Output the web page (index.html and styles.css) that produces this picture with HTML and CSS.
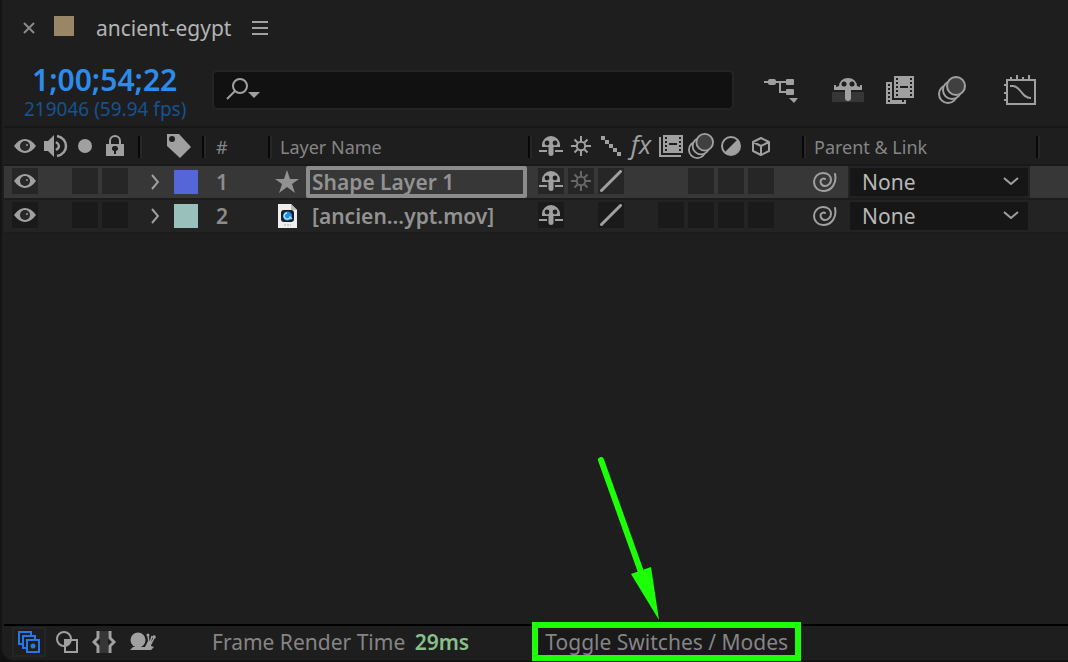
FILE: index.html
```
<!DOCTYPE html>
<html lang="en">
<head>
    <meta charset="UTF-8">
    <meta name="viewport" content="width=device-width, initial-scale=1.0">
    <title>ancient-egypt</title>
    <link rel="stylesheet" href="styles.css">
</head>
<body>

    <!-- Shared icons -->
    <svg class="sprite" aria-hidden="true">
        <symbol id="eye" viewBox="0 0 22 14">
            <path d="M0 7Q5 0 11 0T22 7Q17 14 11 14T0 7z" fill="currentColor"/>
            <circle cx="11" cy="7" r="5" fill="#222"/>
            <circle cx="11" cy="7" r="4" fill="#292929"/>
            <circle cx="13" cy="6" r="1" fill="#999"/>
        </symbol>
        <symbol id="shy" viewBox="0 0 24 20">
            <path d="M3 11V9a9 9 0 0 1 18 0v2h-6.500v7a2.500 2 0 0 1-5 0v-7zM0 14h8v2H0zM16 14h8v2h-8z" fill="currentColor"/>
            <circle cx="8" cy="7" r="2.400" fill="#1e1e1e"/>
            <circle cx="16" cy="7" r="2.400" fill="#1e1e1e"/>
        </symbol>
        <symbol id="sun" viewBox="0 0 20 20">
            <g fill="none" stroke="currentColor" stroke-width="2">
                <circle cx="10" cy="10" r="4.200"/>
                <path d="M10 0v5M10 15v5M0 10h5M15 10h5M3.500 3.500l3 3M13.500 13.500l3 3M3.500 16.500l3-3M13.500 6.500l3-3"/>
            </g>
        </symbol>
        <symbol id="slash" viewBox="0 0 22 22">
            <path d="M1.500 20.500L20.500 1.500" stroke="currentColor" stroke-width="3" stroke-linecap="round"/>
        </symbol>
        <symbol id="film" viewBox="0 0 20 22">
            <path d="M0 0h20v22H0z" fill="currentColor"/>
            <path d="M2 2h2v2H2zM2 6h2v2H2zM2 10h2v2H2zM2 14h2v2H2zM2 18h2v2H2zM16 2h2v2h-2zM16 6h2v2h-2zM16 10h2v2h-2zM16 14h2v2h-2zM16 18h2v2h-2zM6 10h8v2H6z" fill="#1e1e1e"/>
        </symbol>
        <symbol id="blur" viewBox="0 0 28 28">
            <g fill="#1e1e1e" stroke="currentColor" stroke-width="2">
                <circle cx="10" cy="18" r="9"/>
                <circle cx="14" cy="14" r="9"/>
                <circle cx="18" cy="10" r="9" fill="#404040"/>
            </g>
        </symbol>
        <symbol id="chevron" viewBox="0 0 8 16">
            <path d="M1 1l6 7-6 7" fill="none" stroke="currentColor" stroke-width="2"/>
        </symbol>
        <symbol id="down" viewBox="0 0 16 8">
            <path d="M1 1l7 6 7-6" fill="none" stroke="currentColor" stroke-width="2"/>
        </symbol>
        <symbol id="spiral" viewBox="0 0 24 20">
            <path d="M22 2C24 11 19 19 10 19 5 19 1 15 1 10 1 5 5 1 10 1c5 0 8 3 8 7 0 3-3 6-6 6-4 0-5-4-4-6 1-1 3-2 4-1" fill="none" stroke="currentColor" stroke-width="2" stroke-linecap="round"/>
        </symbol>
    </svg>

    <div class="panel">
        <header class="tab">
            <button class="close" aria-label="Close"><svg width="10" height="10" viewBox="0 0 10 10"><path d="M0 0l10 10M10 0L0 10" stroke="currentColor" stroke-width="2"/></svg></button>
            <span class="comp-color"></span>
            <h1>ancient-egypt</h1>
            <button class="menu" aria-label="Panel menu"><svg width="16" height="14" viewBox="0 0 16 14"><path d="M0 1h16M0 7h16M0 13h16" stroke="currentColor" stroke-width="2"/></svg></button>
        </header>

        <div class="controls">
            <div class="time">
                <div class="timecode">1;00;54;22</div>
                <div class="frames">219046 (59.94 fps)</div>
            </div>
            <label class="search">
                <svg width="34" height="24" viewBox="0 0 34 24">
                    <circle cx="14" cy="8" r="7" fill="none" stroke="currentColor" stroke-width="2"/>
                    <path d="M9 13l-8 8" stroke="currentColor" stroke-width="2"/>
                    <path d="M22 14h12l-6 6z" fill="currentColor"/>
                </svg>
                <input type="text" aria-label="Search layers">
            </label>
            <div class="tools">
                <button class="flow" aria-label="Mini-flowchart">
                    <svg width="34" height="26" viewBox="0 0 34 26">
                        <path d="M0 5h24M16 5v10h8" fill="none" stroke="currentColor" stroke-width="2"/>
                        <g fill="currentColor">
                            <rect x="4" y="2" width="8" height="6" rx="2"/>
                            <rect x="22" y="2" width="8" height="6" rx="1"/>
                            <rect x="22" y="12" width="8" height="6" rx="1"/>
                            <path d="M25 21h9l-4 5z"/>
                        </g>
                    </svg>
                </button>
                <button class="hide-shy" aria-label="Hide shy layers">
                    <svg width="32" height="24" viewBox="0 0 32 24">
                        <path d="M0 14h32v10H0z" fill="#363636"/>
                        <path d="M7 8a9 8 0 0 1 18 0l3 1V7h2v5H19v8a3 3 0 0 1-6 0v-8H2V7h2v2z" fill="currentColor"/>
                        <circle cx="12" cy="6" r="2.500" fill="#1e1e1e"/>
                        <circle cx="20" cy="6" r="2.500" fill="#1e1e1e"/>
                    </svg>
                </button>
                <button aria-label="Frame blending">
                    <svg width="28" height="28" viewBox="0 0 28 28">
                        <path d="M0 6h6v18h14v4H0z" fill="currentColor"/>
                        <path d="M2 8h2v2H2zM2 12h2v2H2zM2 16h2v2H2zM2 20h2v2H2zM2 24h2v2H2zM16 24h2v2h-2z" fill="#1e1e1e"/>
                        <use href="#film" x="8" y="0" width="20" height="22"/>
                    </svg>
                </button>
                <button aria-label="Motion blur"><svg width="28" height="28"><use href="#blur"/></svg></button>
                <button class="graph" aria-label="Graph editor">
                    <svg width="32" height="30" viewBox="0 0 32 30">
                        <path d="M3 5h28v24H3zM7 2v3M13 0v5M19 2v3M25 0v5M0 10h3M0 18h3M0 25h3M6 11h3c8 0 8 12 18 12" fill="none" stroke="currentColor" stroke-width="2"/>
                    </svg>
                </button>
            </div>
        </div>

        <main class="layers">
            <table>
                <colgroup>
                    <col class="col-av"><col class="col-label"><col class="col-num"><col class="col-name">
                    <col class="col-switches"><col class="col-parent"><col>
                </colgroup>
                <thead>
                    <tr>
                        <th>
                            <div class="cells av">
                                <span><svg width="22" height="14"><use href="#eye"/></svg></span>
                                <span><svg width="24" height="22" viewBox="0 0 24 22"><path d="M1 6h4l6-6v22l-6-6H1z" fill="currentColor"/><path d="M13 7q6 4 0 8M14 1c12 2 12 18 0 20" fill="none" stroke="currentColor" stroke-width="2.500"/></svg></span>
                                <span><svg width="14" height="14"><circle cx="7" cy="7" r="7" fill="currentColor"/></svg></span>
                                <span><svg width="18" height="22" viewBox="0 0 18 22"><path d="M4 10V6a5 5 0 0 1 10 0v4" fill="none" stroke="currentColor" stroke-width="2"/><path d="M0 9h18v12H0z" fill="currentColor"/><path d="M9 11a2.500 2.500 0 0 1 1 5v3H8v-3a2.500 2.500 0 0 1 1-5z" fill="#1e1e1e"/></svg></span>
                            </div>
                        </th>
                        <th class="tag"><svg width="24" height="24" viewBox="0 0 24 24"><path d="M0 0h12l12 13-11 11L0 12z" fill="currentColor"/><circle cx="5" cy="5" r="3" fill="#1e1e1e"/></svg></th>
                        <th class="num">#</th>
                        <th class="name-head">Layer Name</th>
                        <th>
                            <div class="cells switches">
                                <span><svg width="24" height="20"><use href="#shy"/></svg></span>
                                <span><svg width="20" height="20"><use href="#sun"/></svg></span>
                                <span><svg width="20" height="20" viewBox="0 0 20 20"><path d="M0 0h4v4h4v4h4v4h4v4h4v4h-4v-4h-4v-4H8V8H4V4H0z" fill="currentColor"/></svg></span>
                                <span class="fx">fx</span>
                                <span><svg width="24" height="24" viewBox="0 0 24 24"><path d="M1 3v19h21" fill="none" stroke="currentColor" stroke-width="2"/><path d="M4 1h20v18H4z" fill="currentColor"/><path d="M6 3h2v2H6zM6 7h2v2H6zM6 11h2v2H6zM6 15h2v2H6zM20 3h2v2h-2zM20 7h2v2h-2zM20 11h2v2h-2zM20 15h2v2h-2zM10 9h8v2h-8z" fill="#1e1e1e"/></svg></span>
                                <span><svg width="26" height="26"><use href="#blur"/></svg></span>
                                <span><svg width="20" height="20" viewBox="0 0 20 20"><circle cx="10" cy="10" r="9" fill="none" stroke="currentColor" stroke-width="2"/><path d="M17 3A10 10 0 0 1 3 17z" fill="currentColor"/></svg></span>
                                <span><svg width="18" height="20" viewBox="0 0 18 20"><path d="M9 2l8 4v9l-8 4-8-4V6zM1 6l8 4 8-4M9 10v9" fill="none" stroke="currentColor" stroke-width="2" stroke-linejoin="round"/></svg></span>
                            </div>
                        </th>
                        <th class="parent-head">Parent &amp; Link</th>
                        <th></th>
                    </tr>
                </thead>
                <tbody>
                    <tr class="selected">
                        <td>
                            <div class="cells av">
                                <button class="box" aria-label="Video"><svg width="22" height="14"><use href="#eye"/></svg></button>
                                <span></span>
                                <button class="box" aria-label="Solo"></button>
                                <button class="box" aria-label="Lock"></button>
                            </div>
                        </td>
                        <td>
                            <div class="label">
                                <button aria-label="Expand layer"><svg width="8" height="16"><use href="#chevron"/></svg></button>
                                <span class="swatch blue"></span>
                            </div>
                        </td>
                        <td class="num">1</td>
                        <td>
                            <div class="name">
                                <svg width="24" height="24" viewBox="0 0 24 24"><path d="M12 0l3 9h9l-7 5 3 9-8-6-8 6 3-9-7-5h9z" fill="currentColor"/></svg>
                                <input type="text" value="Shape Layer 1" aria-label="Layer name">
                            </div>
                        </td>
                        <td>
                            <div class="cells switches">
                                <button class="box" aria-label="Shy"><svg width="24" height="20"><use href="#shy"/></svg></button>
                                <button class="box dim" aria-label="Continuously rasterize"><svg width="20" height="20"><use href="#sun"/></svg></button>
                                <button class="box" aria-label="Quality"><svg width="22" height="22"><use href="#slash"/></svg></button>
                                <span></span>
                                <span></span>
                                <button class="box" aria-label="Motion blur"></button>
                                <button class="box" aria-label="Adjustment layer"></button>
                                <button class="box" aria-label="3D layer"></button>
                            </div>
                        </td>
                        <td>
                            <div class="parent">
                                <button aria-label="Parent pick whip"><svg width="24" height="20"><use href="#spiral"/></svg></button>
                                <div class="select">
                                    <select aria-label="Parent of layer 1"><option>None</option></select>
                                    <svg width="16" height="8"><use href="#down"/></svg>
                                </div>
                            </div>
                        </td>
                        <td></td>
                    </tr>
                    <tr>
                        <td>
                            <div class="cells av">
                                <button class="box" aria-label="Video"><svg width="22" height="14"><use href="#eye"/></svg></button>
                                <span></span>
                                <button class="box" aria-label="Solo"></button>
                                <button class="box" aria-label="Lock"></button>
                            </div>
                        </td>
                        <td>
                            <div class="label">
                                <button aria-label="Expand layer"><svg width="8" height="16"><use href="#chevron"/></svg></button>
                                <span class="swatch aqua"></span>
                            </div>
                        </td>
                        <td class="num">2</td>
                        <td>
                            <div class="name">
                                <svg width="24" height="24" viewBox="0 0 24 24">
                                    <path d="M3 0h13l6 6v18H3z" fill="#eee"/>
                                    <path d="M16 0v6h6z" fill="#bbb"/>
                                    <rect x="6" y="6" width="13" height="12" rx="3" fill="#1b1e25"/>
                                    <circle cx="12.500" cy="12" r="4.500" fill="#1e8af0"/>
                                    <path d="M12 9a3 3 0 1 0 3 4l2 2" fill="none" stroke="#9fe0ff" stroke-width="1.500"/>
                                    <path d="M9 21h7" stroke="#aaa" stroke-dasharray="2 1"/>
                                </svg>
                                <span class="file">[ancien...ypt.mov]</span>
                            </div>
                        </td>
                        <td>
                            <div class="cells switches">
                                <button class="box" aria-label="Shy"><svg width="24" height="20"><use href="#shy"/></svg></button>
                                <span></span>
                                <button class="box" aria-label="Quality"><svg width="22" height="22"><use href="#slash"/></svg></button>
                                <span></span>
                                <button class="box" aria-label="Frame blending"></button>
                                <button class="box" aria-label="Motion blur"></button>
                                <button class="box" aria-label="Adjustment layer"></button>
                                <button class="box" aria-label="3D layer"></button>
                            </div>
                        </td>
                        <td>
                            <div class="parent">
                                <button aria-label="Parent pick whip"><svg width="24" height="20"><use href="#spiral"/></svg></button>
                                <div class="select">
                                    <select aria-label="Parent of layer 2"><option>None</option></select>
                                    <svg width="16" height="8"><use href="#down"/></svg>
                                </div>
                            </div>
                        </td>
                        <td></td>
                    </tr>
                </tbody>
            </table>
        </main>

        <footer class="status">
            <div class="panes">
                <button class="active" aria-label="Layer switches pane">
                    <svg width="22" height="22" viewBox="0 0 22 22"><g fill="#1e1e1e" stroke="currentColor" stroke-width="2"><path d="M1 1h12v12H1z"/><path d="M5 5h12v12H5z"/><path d="M9 9h12v12H9z"/></g><circle cx="15" cy="15" r="2.500" fill="currentColor"/></svg>
                </button>
                <button aria-label="Transfer controls pane">
                    <svg width="22" height="22" viewBox="0 0 22 22"><path d="M9 9h6a7 7 0 0 1-6 6z" fill="currentColor"/><circle cx="8" cy="8" r="7" fill="none" stroke="currentColor" stroke-width="2"/><path d="M9 9h12v12H9z" fill="none" stroke="currentColor" stroke-width="2"/></svg>
                </button>
                <button aria-label="In/Out pane">
                    <svg width="24" height="22" viewBox="0 0 24 22"><path d="M8 0h8v22H8z" fill="#363636"/><path d="M6 0v7l-4 4 4 4v7M18 0v7l4 4-4 4v7" fill="none" stroke="currentColor" stroke-width="3"/></svg>
                </button>
                <button aria-label="Render time pane">
                    <svg width="26" height="20" viewBox="0 0 26 20"><circle cx="8" cy="8" r="7.500" fill="currentColor"/><path d="M0 18l3-3h12l3-6h4l-1 5 3 1-3 3z" fill="currentColor"/><path d="M19 11l-1-8M20 11l2-7M21 12l3-6" stroke="currentColor" stroke-width="1.500"/><circle cx="18" cy="3" r="1.500" fill="currentColor"/><circle cx="24" cy="5" r="1.800" fill="currentColor"/></svg>
                </button>
            </div>
            <div class="render">Frame Render Time <strong>29ms</strong></div>
            <div class="toggle">
                <svg class="arrow" width="60" height="168" viewBox="0 0 60 168"><path d="M4 6l40 112" stroke="#1cff07" stroke-width="6" stroke-linecap="round"/><path d="M34 120l20-7 8 53z" fill="#1cff07"/></svg>
                <button>Toggle Switches / Modes</button>
            </div>
        </footer>
    </div>

</body>
</html>
```

FILE: styles.css
```
* {
    box-sizing: border-box;
}

body {
    margin: 0;
    background: #111;
    color: #a0a0a0;
    font-family: "Noto Sans", sans-serif;
    font-size: 21px;
}

svg {
    display: block;
    flex-shrink: 0;
    overflow: visible;
}

button {
    display: flex;
    align-items: center;
    justify-content: center;
    padding: 0;
    border: none;
    background: none;
    color: inherit;
    font: inherit;
}

input,
select {
    color: inherit;
    font: inherit;
    outline: none;
}

.sprite {
    position: absolute;
    width: 0;
    height: 0;
}

.panel {
    display: flex;
    flex-direction: column;
    min-height: 100vh;
    padding-left: 2px;
    background: #1e1e1e;
    border-left: 2px solid #141414;
    border-bottom: 2px solid #141414;
    border-bottom-left-radius: 14px;
}

/* Tab */
.tab {
    display: flex;
    align-items: center;
    height: 56px;
    padding-left: 20px;
}

.close {
    color: #8a8a8a;
}

.comp-color {
    width: 20px;
    height: 20px;
    margin: 0 22px 4px 20px;
    background: #998664;
}

.tab h1 {
    margin: 0 21px 0 0;
    color: #b4b4b4;
    font-size: 21px;
    font-weight: 400;
}

/* Time, search and tools */
.controls {
    display: flex;
    align-items: center;
    height: 70px;
    padding: 0 32px 2px 0;
}

.time {
    width: 208px;
    padding: 8px 0 0 20px;
}

.timecode {
    padding-left: 8px;
    color: #2d8ceb;
    font-size: 30px;
    font-weight: 600;
    line-height: 30px;
}

.frames {
    color: #15528f;
    font-size: 19px;
    line-height: 28px;
}

.search {
    display: flex;
    flex: 1;
    align-items: center;
    height: 40px;
    padding-left: 12px;
    background: #111;
    border: 2px solid #242424;
    border-radius: 5px;
}

.search input {
    flex: 1;
    min-width: 0;
    border: none;
    background: none;
}

.tools {
    display: flex;
    align-items: center;
    gap: 24px;
    margin-left: 30px;
}

.flow {
    margin-right: 10px;
}

.hide-shy {
    margin-right: -2px;
}

.graph {
    margin-left: 14px;
}

/* Layer list */
.layers {
    flex: 1;
    border-top: 2px solid #161616;
}

table {
    width: 100%;
    table-layout: fixed;
    border-spacing: 0;
}

.col-av {
    width: 136px;
}

.col-label {
    width: 64px;
}

.col-num {
    width: 66px;
}

.col-name {
    width: 260px;
}

.col-switches {
    width: 274px;
}

.col-parent {
    width: 234px;
}

th {
    position: relative;
    height: 38px;
    padding: 0;
    border-bottom: 2px solid #191919;
    color: #a0a0a0;
    font-size: 18px;
    font-weight: 400;
    text-align: left;
}

/* Column divider */
th:not(:last-child)::after {
    content: "";
    position: absolute;
    top: 8px;
    right: 0;
    width: 2px;
    height: 22px;
    background: #080808;
    box-shadow: 2px 0 #272727;
}

td {
    height: 34px;
    padding: 0;
    background: #232323;
    border-bottom: 2px solid #1c1c1c;
}

.selected td {
    background: #373737;
}

.cells {
    display: flex;
    gap: 4px;
    padding-left: 8px;
}

td .cells {
    padding-bottom: 2px;
}

.cells > * {
    display: flex;
    align-items: center;
    justify-content: center;
    width: 26px;
    height: 26px;
}

.box {
    background: #1a1a1a;
}

.selected .box {
    background: #262626;
}

.dim {
    color: #666;
}

.cells .fx {
    font-family: "Open Sans", sans-serif;
    font-size: 26px;
    font-style: italic;
    line-height: 22px;
    padding-bottom: 4px;
}

.tag {
    padding-left: 27px;
}

.num {
    padding-left: 12px;
}

th.num,
.name-head,
.parent-head {
    padding-top: 2px;
    color: #858585;
}

td.num {
    color: #8c8c8c;
    font-weight: 600;
}

.name-head,
.parent-head {
    padding-left: 10px;
}

.label {
    display: flex;
    align-items: center;
    gap: 15px;
    padding-left: 11px;
}

.swatch {
    width: 24px;
    height: 24px;
}

.blue {
    background: #5566d8;
}

.aqua {
    background: #9ac0bb;
}

.name {
    display: flex;
    align-items: center;
    gap: 7px;
    height: 32px;
    padding: 0 3px 0 5px;
    color: #929292;
    font-weight: 600;
}

.name input {
    flex: 1;
    min-width: 0;
    height: 32px;
    padding: 0 2px;
    background: #373737;
    border: 4px solid #8c8c8c;
    border-radius: 2px;
}

.file {
    padding-left: 6px;
}

.parent {
    display: flex;
    align-items: center;
    justify-content: space-between;
    padding: 0 10px 0 9px;
}

.select {
    position: relative;
    width: 178px;
    box-shadow: 0 0 0 2px #232323;
}

.select select {
    width: 100%;
    height: 28px;
    padding: 0 12px;
    appearance: none;
    background: #161616;
    border: none;
    border-radius: 0;
    color: #b8b8b8;
}

.select svg {
    position: absolute;
    top: 9px;
    right: 9px;
    pointer-events: none;
}

/* Bottom bar */
.status {
    display: flex;
    align-items: center;
    height: 36px;
    padding-bottom: 3px;
    border-top: 2px solid #000;
    color: #858585;
}

.panes {
    display: flex;
    align-items: center;
    gap: 14px;
    width: 208px;
    padding-left: 8px;
}

.active {
    width: 34px;
    height: 30px;
    margin-right: -4px;
    border: 2px solid #252525;
    color: #2478ea;
}

.panes button:not(.active) {
    color: #a0a0a0;
}

.render strong {
    margin-left: 4px;
    color: #88c08a;
    font-weight: 600;
}

.toggle {
    position: relative;
    margin-left: 63px;
}

.toggle button {
    width: 269px;
    height: 39px;
    background: #191919;
    border: 6px solid #1cff07;
    white-space: nowrap;
}

.arrow {
    position: absolute;
    bottom: 100%;
    left: 65px;
}
```
